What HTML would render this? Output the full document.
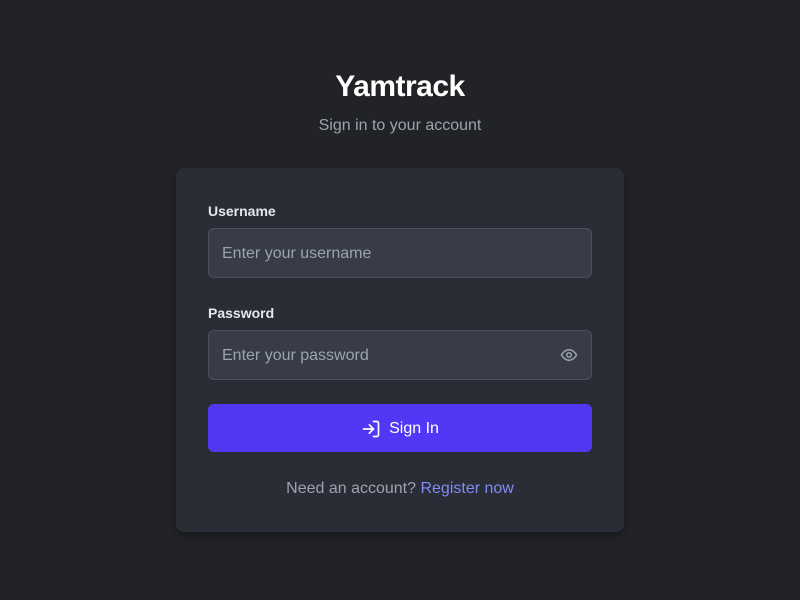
<!DOCTYPE html>
<html><head><meta charset="utf-8"><style>
*{box-sizing:border-box;margin:0;padding:0}
body{width:800px;height:600px;background:#212327;font-family:"Liberation Sans",sans-serif;position:relative;overflow:hidden}
h1{position:absolute;top:70px;left:0;width:800px;text-align:center;color:#fff;font-size:30px;font-weight:bold;letter-spacing:-0.5px}
.sub{position:absolute;top:117px;left:0;width:800px;text-align:center;color:#9ca3af;font-size:16px}
.card{position:absolute;left:176px;top:168px;width:448px;height:364px;background:#2a2d35;border-radius:8px;box-shadow:0 4px 10px rgba(0,0,0,.25)}
label{position:absolute;left:32px;color:#e5e7eb;font-size:14px;font-weight:bold}
.in{position:absolute;left:32px;width:384px;height:50px;background:#383c47;border:1px solid #4b5060;border-radius:6px;color:#9ca3af;font-size:16px;padding-left:13px;line-height:50px}
.btn{position:absolute;left:32px;top:236px;width:384px;height:48px;background:#5038f5;border-radius:6px;color:#fff;font-size:16px;display:flex;align-items:center;justify-content:center;gap:8px;padding-top:1px}
.foot{position:absolute;top:312px;left:0;width:448px;text-align:center;color:#9ca3af;font-size:16px}
.foot span{color:#818cf8}
</style></head><body>
<h1>Yamtrack</h1>
<div class="sub">Sign in to your account</div>
<div class="card">
<label style="top:35px">Username</label>
<div class="in" style="top:60px">Enter your username</div>
<label style="top:137px">Password</label>
<div class="in" style="top:162px">Enter your password
<svg style="position:absolute;right:12px;top:15px" width="20" height="18" viewBox="0 0 24 24" fill="none" stroke="#9ca3af" stroke-width="2" stroke-linecap="round" stroke-linejoin="round"><path d="M2 12s3.5-7 10-7 10 7 10 7-3.5 7-10 7S2 12 2 12z"/><circle cx="12" cy="12" r="3"/></svg></div>
<div class="btn"><svg width="20" height="20" viewBox="0 0 24 24" fill="none" stroke="#fff" stroke-width="2" stroke-linecap="round" stroke-linejoin="round"><path d="M15 3h4a2 2 0 0 1 2 2v14a2 2 0 0 1-2 2h-4"/><path d="M10 17l5-5-5-5"/><path d="M15 12H3"/></svg>Sign In</div>
<div class="foot">Need an account? <span>Register now</span></div>
</div>
</body></html>
